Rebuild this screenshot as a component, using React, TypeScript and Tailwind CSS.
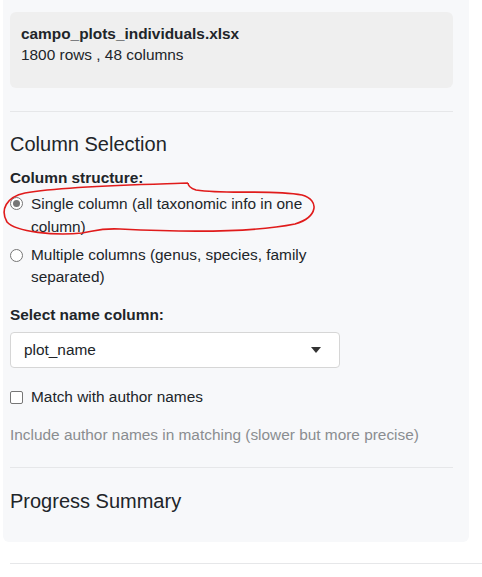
import React from "react";

const font = { fontFamily: '"Liberation Sans", Arial, sans-serif' };

const Radio = ({ checked }: { checked?: boolean }) => (
  <span className="mt-[5px] flex h-[13px] w-[13px] shrink-0 items-center justify-center rounded-full border border-[#767676] bg-white">
    {checked && <span className="h-[7px] w-[7px] rounded-full bg-[#767676]" />}
  </span>
);

export default function App() {
  return (
    <div className="relative h-[577px] w-[482px] overflow-hidden bg-white text-[15.4px] text-[#212529]" style={font}>
      <div className="ml-[3px] w-[466px] rounded-b-md bg-[#f7f8fa] pt-[12px] pr-[16px] pb-[29px] pl-[7px]">
        <div className="h-[76px] rounded-md bg-[#efefef] px-[11px] pt-[11px] leading-[21px]">
          <div className="font-bold">campo_plots_individuals.xlsx</div>
          <div>1800 rows , 48 columns</div>
        </div>

        <div className="mt-[23px] h-px bg-[#e6e7e9]" />

        <div className="mt-[20px] text-[20px] leading-[24px]">Column Selection</div>

        <div className="mt-[11px] font-bold leading-[22px]">Column structure:</div>
        <div className="mt-[3px] flex gap-[8px] leading-[23px]">
          <Radio checked />
          <span>
            Single column (all taxonomic info in one
            <br />
            column)
          </span>
        </div>
        <div className="mt-[6px] flex gap-[8px] leading-[22px]">
          <Radio />
          <span>
            Multiple columns (genus, species, family
            <br />
            separated)
          </span>
        </div>

        <div className="mt-[16px] font-bold leading-[22px]">Select name column:</div>
        <div className="mt-[6px] flex h-[36px] w-[330px] items-center justify-between rounded-[4px] border border-[#d6d6d6] bg-white pr-[18px] pl-[13px]">
          <span>plot_name</span>
          <svg width="10" height="6" viewBox="0 0 10 6">
            <path d="M0 0 L10 0 L5 6 Z" fill="#333" />
          </svg>
        </div>

        <div className="mt-[18px] flex items-center gap-[8px] leading-[22px]">
          <span className="h-[13px] w-[13px] rounded-[2px] border border-[#767676] bg-white" />
          <span>Match with author names</span>
        </div>

        <div className="mt-[16px] leading-[22px] text-[#8a8d90]">
          Include author names in matching (slower but more precise)
        </div>

        <div className="mt-[21px] h-px bg-[#e6e7e9]" />

        <div className="mt-[21px] text-[20px] leading-[24px]">Progress Summary</div>
      </div>

      <div className="mt-[21px] ml-[10px] h-px bg-[#e6e7e9]" />

      <svg className="pointer-events-none absolute top-0 left-0" width="482" height="577">
        <path
          d="M188 183 C170 184 70 185 25 193 C6 197 0 210 7 222 C16 232 55 236 82 233 C95 231 100 228 120 229 C180 232 250 233 295 224 C318 217 320 200 302 195 C270 189 230 195 196 190 C190 188 188 185 188 183"
          fill="none"
          stroke="#e01b1b"
          strokeWidth="1.6"
        />
      </svg>
    </div>
  );
}
